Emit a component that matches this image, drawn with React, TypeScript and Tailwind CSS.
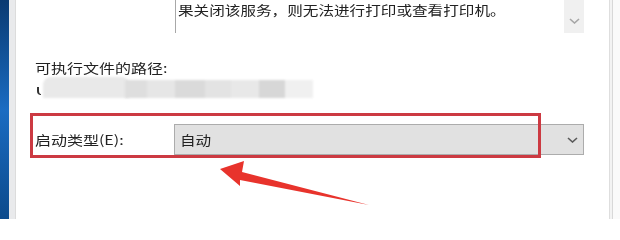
import React from "react";

const font = "font-['Noto_Sans_CJK_SC','Noto_Sans_CJK_JP',sans-serif]";

// the screenshot is stretched sideways, so text is widened the same way
const Wide = ({ children, className = "" }: { children: React.ReactNode; className?: string }) => (
  <span className={`inline-block origin-left whitespace-nowrap ${className}`}>{children}</span>
);

const Chevron = ({ className = "" }: { className?: string }) => (
  <svg width="11" height="6" viewBox="0 0 11 6" className={className}>
    <path d="M1 1 L5.5 5 L10 1" fill="none" stroke="currentColor" strokeWidth="1.6" />
  </svg>
);

const App = () => {
  return (
    <div className={`relative flex w-[620px] h-[219px] overflow-hidden bg-white ${font}`}>
      {/* desktop edge behind the dialog */}
      <div className="w-[9px] h-full bg-linear-to-b from-[#0a3a72] via-[#1b6cc2] to-[#0c4a8c]" />
      <div className="w-[7px] h-full bg-[#e9eaec] border-r border-[#dcdcdc]" />

      <div className="flex-1 flex flex-col text-[#222]">
        {/* description box (scrolled) */}
        <div className="ml-[159px] w-[409px] h-[33px] flex border-l border-[#a8a8a8]">
          <div className="flex-1 pl-[2px] pt-[3px] text-[13px] leading-[13px]">
            <Wide className="scale-x-[1.2]">果关闭该服务，则无法进行打印或查看打印机。</Wide>
          </div>
          <div className="w-[20px] h-full bg-[#f0f0f0] flex justify-center pt-[18px] text-[#a6a6a6]">
            <Chevron />
          </div>
        </div>

        <div className="pl-[19px] mt-[28px] text-[13px] leading-[13px]">
          <Wide className="scale-x-[1.23]">可执行文件的路径:</Wide>
        </div>

        {/* blurred path */}
        <div className="relative ml-[21px] mt-[3px] w-[276px] h-[21px]">
          <div className="absolute left-[6px] top-0 w-[86px] h-[21px] rounded-t-[8px] bg-[#e9e9e9] blur-[1px]" />
          <div className="absolute left-[88px] top-[3px] w-[188px] h-[18px] flex blur-[1px]">
            <div className="w-[22px] bg-[#dedede]" />
            <div className="w-[28px] bg-[#e6e6e6]" />
            <div className="w-[30px] bg-[#dadada]" />
            <div className="w-[26px] bg-[#e3e3e3]" />
            <div className="w-[28px] bg-[#e8e8e8]" />
            <div className="w-[26px] bg-[#d7d7d7]" />
            <div className="w-[28px] bg-[#f0f0f0]" />
          </div>
          <div className="absolute left-0 top-[10px] w-[4px] h-[8px] rounded-bl-full border-l-2 border-b border-[#333]" />
        </div>

        {/* startup type row */}
        <div className="relative mt-[15px] h-[45px] pt-[11px]">
          <div className="flex items-center h-[31px]">
            <div className="w-[158px] pl-[19px] text-[13px] leading-[13px]">
              <Wide className="scale-x-[1.23]">启动类型(E):</Wide>
            </div>
            <div className="w-[410px] h-[31px] flex items-center justify-between bg-[#e1e1e1] border border-[#acacac] pl-[5px] pr-[5px]">
              <span className="text-[13px] leading-[13px]">
                <Wide className="scale-x-[1.2]">自动</Wide>
              </span>
              <Chevron className="text-[#5a5a5a]" />
            </div>
          </div>
          <div className="absolute left-[14px] top-0 w-[511px] h-[45px] border-[3px] border-[#cc3a42]" />
        </div>
      </div>

      {/* dialog right edge */}
      <div className="w-[11px] h-full flex">
        <div className="w-px bg-[#dedede]" />
        <div className="w-[2px] bg-[#f3f3f3]" />
        <div className="w-px bg-[#d8d8d8]" />
        <div className="flex-1 bg-[#fafafa]" />
      </div>

      {/* annotation arrow */}
      <svg className="absolute left-0 top-0 pointer-events-none" width="620" height="219" viewBox="0 0 620 219">
        <polygon
          points="220,169 244,161 242,172 369,205 240,180 240,186"
          fill="#e8332c"
        />
      </svg>
    </div>
  );
};

export default App;
